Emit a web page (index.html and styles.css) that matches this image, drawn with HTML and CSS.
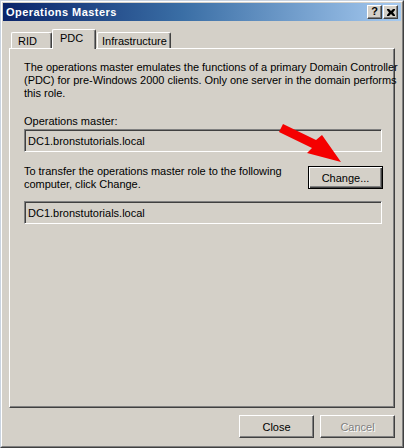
FILE: index.html
```html
<!DOCTYPE html>
<html>
<head>
<meta charset="utf-8">
<link rel="stylesheet" href="styles.css">
</head>
<body>
<div class="window">
  <div class="frame">
    <div class="titlebar">
      <span class="title">Operations Masters</span>
      <div class="tbtns">
        <span class="tbtn help">?</span>
        <span class="tbtn close"><svg width="8" height="7" viewBox="0 0 8 7"><path d="M0 0h2l2 2 2-2h2v1l-2 2.5 2 2.5v1h-2l-2-2-2 2h-2v-1l2-2.5-2-2.5z" fill="#000"/></svg></span>
      </div>
    </div>
    <div class="client">
      <div class="tabs">
        <div class="tab rid">RID</div>
        <div class="tab sel">PDC</div>
        <div class="tab infra">Infrastructure</div>
      </div>
      <div class="panel">
        <p class="desc">The operations master emulates the functions of a primary Domain Controller<br>(PDC) for pre-Windows 2000 clients. Only one server in the domain performs<br>this role.</p>
        <div class="label">Operations master:</div>
        <div class="field">DC1.bronstutorials.local</div>
        <div class="transfer">
          <p class="ttext">To transfer the operations master role to the following<br>computer, click Change.</p>
          <div class="btn default"><span class="btn-in">Change...</span></div>
        </div>
        <div class="field second">DC1.bronstutorials.local</div>
      </div>
      <div class="buttons">
        <div class="btn"><span class="btn-in">Close</span></div>
        <div class="btn disabled"><span class="btn-in">Cancel</span></div>
      </div>
    </div>
  </div>
  <svg class="arrow" width="404" height="448" viewBox="0 0 404 448">
    <polygon points="283,124 316,140 322,135 341,162 307,153 312,148 279,132" fill="#f50000"/>
  </svg>
</div>
</body>
</html>
```

FILE: styles.css
```css
html, body {
  margin: 0;
  padding: 0;
  background: #d4d0c8;
}
body {
  font-family: "Liberation Sans", Arial, sans-serif;
  font-size: 11px;
  color: #000;
}
.window {
  width: 404px;
  height: 448px;
  box-sizing: border-box;
  border: 1px solid;
  border-color: #c9d3e0 #404040 #404040 #c9d3e0;
  position: relative;
  background: #d4d0c8;
}
.frame {
  height: 100%;
  box-sizing: border-box;
  border: 1px solid;
  border-color: #fff #808080 #808080 #fff;
  padding: 1px 1px 0 1px;
  display: flex;
  flex-direction: column;
}
.titlebar {
  height: 18px;
  flex: none;
  display: flex;
  align-items: center;
  justify-content: space-between;
  background: linear-gradient(to right, #0a246a 0%, #3a6ea5 45%, #a6caf0 100%);
}
.title {
  color: #fff;
  font-weight: bold;
  font-size: 11px;
  padding-left: 3px;
  letter-spacing: 0.45px;
}
.tbtns {
  display: flex;
  gap: 1px;
  padding-right: 3px;
}
.tbtn {
  width: 15px;
  height: 14px;
  box-sizing: border-box;
  background: #d4d0c8;
  border: 1px solid;
  border-color: #fff #404040 #404040 #fff;
  box-shadow: inset -1px -1px 0 #808080;
  display: flex;
  align-items: center;
  justify-content: center;
  font-weight: bold;
  font-size: 11px;
  line-height: 1;
}
.tbtn.help {
  padding-bottom: 1px;
}
.client {
  flex: 1;
  display: flex;
  flex-direction: column;
  padding: 0 6px;
}
.tabs {
  margin-top: 8px;
  height: 19px;
  display: flex;
  align-items: flex-end;
  padding-left: 2px;
  flex: none;
}
.tab {
  height: 16px;
  box-sizing: border-box;
  border-top: 1px solid #fff;
  border-left: 1px solid #fff;
  border-right: 1px solid #404040;
  box-shadow: inset -1px 0 0 #808080;
  border-radius: 2px 2px 0 0;
  padding: 2px 6px 0 6px;
  line-height: 13px;
  white-space: nowrap;
}
.tab.rid {
  width: 41px;
}
.tab.sel {
  height: 20px;
  width: 44px;
  margin-bottom: -1px;
  padding-top: 2px;
  padding-left: 7px;
  position: relative;
  z-index: 1;
  background: #d4d0c8;
}
.tab.infra {
  width: 74px;
  padding-left: 4px;
  margin-left: 1px;
}
.panel {
  height: 360px;
  box-sizing: border-box;
  border: 1px solid;
  border-color: #fff #404040 #404040 #fff;
  box-shadow: inset -1px -1px 0 #808080;
  padding: 12px 12px 0 14px;
  flex: none;
}
.desc, .ttext {
  margin: 0;
  line-height: 13px;
  white-space: nowrap;
  letter-spacing: -0.03px;
}
.label {
  margin-top: 15px;
  line-height: 13px;
}
.field {
  margin-top: 1px;
  height: 23px;
  box-sizing: border-box;
  border: 1px solid;
  border-color: #808080 #fff #fff #808080;
  box-shadow: inset 1px 1px 0 #404040, inset -1px -1px 0 #d4d0c8;
  padding: 0 3px;
  display: flex;
  align-items: center;
}
.field.second {
  margin-top: 10px;
}
.transfer {
  margin-top: 13px;
  display: flex;
  justify-content: space-between;
  align-items: flex-start;
}
.btn {
  width: 75px;
  height: 23px;
  box-sizing: border-box;
  border: 1px solid;
  border-color: #fff #404040 #404040 #fff;
  box-shadow: inset -1px -1px 0 #808080;
  display: flex;
  align-items: center;
  justify-content: center;
}
.btn.default {
  margin-top: 1px;
  margin-right: -1px;
  border-color: #000;
  box-shadow: inset 1px 1px 0 #fff, inset -1px -1px 0 #404040, inset -2px -2px 0 #808080;
}
.btn.disabled {
  color: #808080;
  text-shadow: 1px 1px 0 #fff;
}
.buttons {
  margin-top: 7px;
  display: flex;
  justify-content: flex-end;
  gap: 6px;
}
.arrow {
  position: absolute;
  left: -1px;
  top: -1px;
  pointer-events: none;
}
```
